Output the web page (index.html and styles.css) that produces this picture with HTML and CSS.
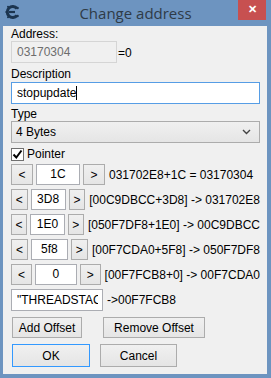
FILE: index.html
```html
<!DOCTYPE html>
<html lang="en">
<head>
    <meta charset="UTF-8">
    <title>Change address</title>
    <link rel="stylesheet" href="styles.css">
</head>
<body>
    <div class="window">
        <div class="titlebar">
            <svg class="app-icon" width="16" height="16" viewBox="0 0 16 16">
                <path d="M12 4.5 A5.5 5.5 0 1 0 12 11.5" fill="none" stroke="#1c3550" stroke-width="3"/>
                <path d="M4 8 H10" stroke="#1c3550" stroke-width="2.2"/>
                <circle cx="12.5" cy="4" r="1.3" fill="#1c3550"/>
                <circle cx="12.5" cy="12" r="1.3" fill="#1c3550"/>
                <circle cx="3" cy="2.8" r="1" fill="#1c3550"/>
                <circle cx="1.3" cy="8" r="1" fill="#1c3550"/>
                <circle cx="3" cy="13.2" r="1" fill="#1c3550"/>
            </svg>
            <span class="title">Change address</span>
            <span class="close-btn">&#x2715;</span>
        </div>
        <div class="client">
            <div class="label">Address:</div>
            <div class="addr-row">
                <div class="edit disabled addr-edit">03170304</div>
                <span class="addr-value">=0</span>
            </div>
            <div class="label gap-desc">Description</div>
            <div class="edit focused">stopupdate<span class="caret"></span></div>
            <div class="label gap-type">Type</div>
            <div class="combo">
                <span>4 Bytes</span>
                <svg width="9" height="6" viewBox="0 0 9 6"><path d="M1 1 L4.5 4.5 L8 1" fill="none" stroke="#444" stroke-width="1.4"/></svg>
            </div>
            <div class="check-row">
                <span class="checkbox">
                    <svg width="11" height="11" viewBox="0 0 11 11"><path d="M1.5 5.5 L4.3 8.5 L9.5 1.5" fill="none" stroke="#000" stroke-width="2"/></svg>
                </span>
                <span>Pointer</span>
            </div>
            <div class="offsets">
                <div class="offset-row">
                    <span class="btn small">&lt;</span>
                    <div class="edit offset-edit">1C</div>
                    <span class="btn small">&gt;</span>
                    <span class="offset-text">031702E8+1C = 03170304</span>
                </div>
                <div class="offset-row">
                    <span class="btn small">&lt;</span>
                    <div class="edit offset-edit">3D8</div>
                    <span class="btn small">&gt;</span>
                    <span class="offset-text">[00C9DBCC+3D8] -&gt; 031702E8</span>
                </div>
                <div class="offset-row">
                    <span class="btn small">&lt;</span>
                    <div class="edit offset-edit">1E0</div>
                    <span class="btn small">&gt;</span>
                    <span class="offset-text">[050F7DF8+1E0] -&gt; 00C9DBCC</span>
                </div>
                <div class="offset-row">
                    <span class="btn small">&lt;</span>
                    <div class="edit offset-edit">5f8</div>
                    <span class="btn small">&gt;</span>
                    <span class="offset-text">[00F7CDA0+5F8] -&gt; 050F7DF8</span>
                </div>
                <div class="offset-row">
                    <span class="btn small">&lt;</span>
                    <div class="edit offset-edit">0</div>
                    <span class="btn small">&gt;</span>
                    <span class="offset-text">[00F7FCB8+0] -&gt; 00F7CDA0</span>
                </div>
                <div class="offset-row base-row">
                    <input class="base-edit" type="text" value="&quot;THREADSTACK0&quot;-00000758" readonly>
                    <span class="offset-text">-&gt;00F7FCB8</span>
                </div>
            </div>
            <div class="button-row">
                <span class="btn add-btn">Add Offset</span>
                <span class="btn remove-btn">Remove Offset</span>
            </div>
            <div class="button-row dialog-row">
                <span class="btn default ok-btn">OK</span>
                <span class="btn cancel-btn">Cancel</span>
            </div>
        </div>
    </div>
</body>
</html>
```

FILE: styles.css
```css
body {
    margin: 0;
    padding: 0;
    font-family: "Liberation Sans", Arial, sans-serif;
    font-size: 12px;
    color: #000;
    background-color: #6d94c0;
}
.window {
    width: 271px;
    height: 378px;
    background-color: #6d94c0;
    display: flex;
    flex-direction: column;
}
.titlebar {
    height: 26px;
    display: flex;
    align-items: flex-start;
    position: relative;
}
.app-icon {
    margin: 4px 0 0 5px;
}
.title {
    position: absolute;
    left: 0;
    right: 0;
    top: 3px;
    text-align: center;
    font-family: "Open Sans", sans-serif;
    font-size: 15px;
    color: #2f3b47;
}
.close-btn {
    position: absolute;
    right: 5px;
    top: 0;
    width: 28px;
    height: 20px;
    background-color: #c75050;
    color: #fff;
    font-size: 11px;
    font-weight: bold;
    text-align: center;
    line-height: 19px;
}
.client {
    flex: 1;
    margin: 0 4px 4px 3px;
    background-color: #f0f0f0;
    padding: 1px 7px 0 8px;
}
.label {
    height: 14px;
    line-height: 14px;
}
.gap-desc {
    margin-top: 4px;
    margin-bottom: 1px;
}
.gap-type {
    margin-top: 3px;
}
.edit {
    box-sizing: border-box;
    height: 22px;
    line-height: 20px;
    border: 1px solid #abadb3;
    background-color: #fff;
    padding: 0 5px;
    white-space: nowrap;
    overflow: hidden;
}
.edit.disabled {
    background-color: #f0f0f0;
    border-color: #d5d5d5;
    color: #6d6d6d;
}
.edit.focused {
    border-color: #569de5;
}
.caret {
    display: inline-block;
    width: 1px;
    height: 14px;
    background-color: #000;
    vertical-align: -3px;
}
.addr-row {
    display: flex;
    align-items: center;
}
.addr-edit {
    width: 106px;
}
.addr-value {
    margin-left: 1px;
    padding-top: 2px;
}
.combo {
    box-sizing: border-box;
    height: 22px;
    border: 1px solid #acacac;
    background: linear-gradient(#f0f0f0, #e5e5e5);
    display: flex;
    align-items: center;
    justify-content: space-between;
    padding: 0 8px 0 4px;
}
.check-row {
    height: 20px;
    display: flex;
    align-items: center;
    gap: 3px;
    margin-top: 1px;
}
.checkbox {
    box-sizing: border-box;
    width: 13px;
    height: 13px;
    border: 1px solid #707070;
    background-color: #fff;
    display: flex;
    align-items: center;
    justify-content: center;
}
.offsets {
    display: flex;
    flex-direction: column;
    gap: 4px;
}
.offset-row {
    height: 21px;
    display: flex;
    align-items: center;
    gap: 2px;
}
.btn {
    box-sizing: border-box;
    display: flex;
    align-items: center;
    justify-content: center;
    border: 1px solid #acacac;
    background: linear-gradient(#f0f0f0, #e5e5e5);
    white-space: nowrap;
}
.btn.small {
    width: 22px;
    height: 21px;
}
.offset-edit {
    width: 44px;
    height: 21px;
    text-align: center;
    line-height: 19px;
    margin: 0 1px;
}
.offset-text {
    margin-left: 2px;
    white-space: nowrap;
}
.base-row {
    height: 22px;
}
.base-edit {
    box-sizing: border-box;
    width: 92px;
    height: 22px;
    margin: 0;
    padding: 0 4px 0 5px;
    border: 1px solid #abadb3;
    background-color: #fff;
    font-family: "Liberation Sans", Arial, sans-serif;
    font-size: 12px;
    color: #000;
    outline: none;
}
.button-row {
    display: flex;
    margin-top: 6px;
}
.add-btn {
    width: 70px;
    height: 21px;
    margin-left: 1px;
}
.remove-btn {
    width: 102px;
    height: 21px;
    margin-left: 21px;
}
.dialog-row {
    margin-top: 6px;
}
.ok-btn {
    width: 78px;
    height: 23px;
    margin-left: 1px;
}
.btn.default {
    border-color: #3399ff;
}
.cancel-btn {
    width: 77px;
    height: 23px;
    margin-left: 10px;
}
```
